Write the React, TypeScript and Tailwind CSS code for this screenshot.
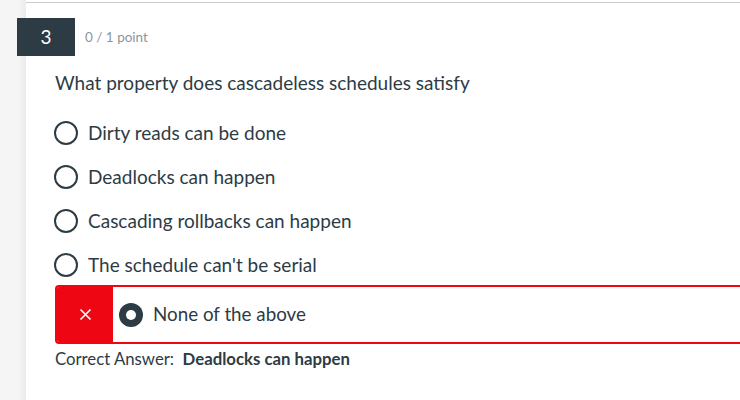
export default function App() {
  const options = [
    'Dirty reads can be done',
    'Deadlocks can happen',
    'Cascading rollbacks can happen',
    "The schedule can't be serial",
  ]

  return (
    <div
      className="flex h-[400px] w-[740px] overflow-hidden bg-white text-[#2d3b45]"
      style={{ fontFamily: 'Lato, "Noto Sans", sans-serif' }}
    >
      <div className="w-[26px] shrink-0 bg-gradient-to-r from-[#f5f5f5] from-70% to-[#ebebeb]" />
      <div className="relative flex-1">
        <div className="mt-[2px] h-px bg-[#c7cdd1]" />
        <div className="mt-[15px] flex items-center">
          <div className="-ml-[9px] flex h-[38px] w-[58px] items-center justify-center bg-[#2d3b45] text-[19px] text-white">
            3
          </div>
          <span className="ml-[10px] text-[13.5px] text-[#8b969e]">0 / 1 point</span>
        </div>
        <div className="ml-[29px] mt-[14px] text-[19px] leading-[26px]">
          What property does cascadeless schedules satisfy
        </div>
        <div className="ml-[28px] mt-[25px] flex flex-col gap-[20px]">
          {options.map((o) => (
            <div key={o} className="flex h-[24px] items-center">
              <span className="h-[24px] w-[24px] shrink-0 rounded-full border-[2.5px] border-[#2d3b45]" />
              <span className="ml-[10px] text-[19px]">{o}</span>
            </div>
          ))}
        </div>
        <div className="ml-[29px] mt-[8px] flex h-[59px] overflow-hidden rounded-l-[4px] border-2 border-r-0 border-[#ee0612]">
          <div className="flex w-[56px] items-center justify-center bg-[#ee0612]">
            <svg width="13" height="13" viewBox="0 0 13 13" fill="none">
              <path d="M1.5 1.5 L11.5 11.5 M11.5 1.5 L1.5 11.5" stroke="white" strokeWidth="1.6" />
            </svg>
          </div>
          <div className="flex items-center pl-[6px]">
            <span className="flex h-[24px] w-[24px] items-center justify-center rounded-full bg-[#2d3b45]">
              <span className="h-[10px] w-[10px] rounded-full bg-white" />
            </span>
            <span className="ml-[10px] text-[18.8px]">None of the above</span>
          </div>
        </div>
        <div className="ml-[29px] mt-[3px] text-[16.75px] leading-[24px]">
          Correct Answer:&nbsp; <span className="font-bold">Deadlocks can happen</span>
        </div>
      </div>
    </div>
  )
}
